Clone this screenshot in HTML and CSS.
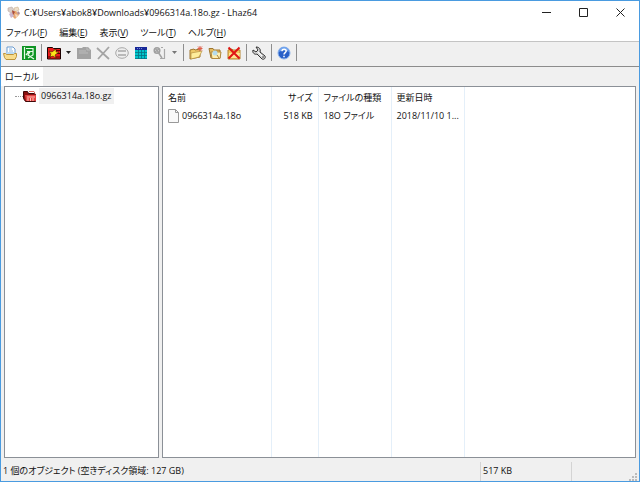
FILE: index.html
```
<!DOCTYPE html>
<html lang="ja">
  <head>
    <meta charset="utf-8" />
    <title>Lhaz64</title>
    <link rel="stylesheet" href="styles.css">
  </head>
  <body>
    <div class="window">
      <header class="titlebar">
        <svg class="app-icon" width="14" height="14" viewBox="0 0 14 14">
          <path d="M1 2l4-1 2 3-3 3-3-2z" fill="#d9cfc8" stroke="#b8aaa2" stroke-width=".6" />
          <path d="M7 2l4-1 1 3-4 2z" fill="#eedfc9" stroke="#cbb18f" stroke-width=".6" />
          <path d="M5 5l4 0 3 4-4 4-4-4z" fill="#e8a56f" />
          <path d="M2 8l3-2 2 4-3 2z" fill="#cbb6ce" />
          <path d="M5 4l3 2-2 3z" fill="#a54c43" />
          <path d="M8 8l3 1-2 3z" fill="#f4d9c0" />
          <path d="M11 5l2 2-1 2-2-2z" fill="#ae8a92" />
        </svg>
        <span class="title">C:¥Users¥abok8¥Downloads¥0966314a.18o.gz - Lhaz64</span>
        <div class="caption">
          <button aria-label="最小化"><svg width="9" height="9" viewBox="0 0 9 9"><path d="M0 4.5h9" /></svg></button>
          <button aria-label="最大化"><svg width="9" height="9" viewBox="0 0 9 9"><path d="M.5.5h8v8h-8z" /></svg></button>
          <button aria-label="閉じる"><svg width="9" height="9" viewBox="0 0 9 9"><path d="M.5.5l8 8M8.5.5l-8 8" /></svg></button>
        </div>
      </header>

      <nav class="menubar">
        <button>ファイル(<u>F</u>)</button>
        <button>編集(<u>E</u>)</button>
        <button>表示(<u>V</u>)</button>
        <button>ツール(<u>T</u>)</button>
        <button>ヘルプ(<u>H</u>)</button>
      </nav>

      <div class="toolbar">
        <button aria-label="開く">
          <svg width="14" height="14" viewBox="0 0 14 14">
            <path d="M4 1h6l2 2v6H4z" fill="#fff" stroke="#6a9bd0" />
            <path d="M6 3h3M6 5h4" stroke="#8db6e2" />
            <path d="M3 9l1-3h7l2 3z" fill="#b9d9f5" />
            <path d="M.5 7.500h2l1 1h7l1-1h2v3l-1.500 3h-9l-1.500-2z" fill="#f8dc8c" stroke="#bd943c" />
          </svg>
        </button>
        <button aria-label="圧縮">
          <svg width="14" height="14" viewBox="0 0 14 14">
            <path d="M0 0h14v14H0z" fill="#0f9424" />
            <path d="M2.500 1v12M4 2.500h7v3H5M7 5.500L4 9M8 6l-2 3 6 4M11 6v3L6 12" fill="none" stroke="#e8fbe8" stroke-width="1.200" />
          </svg>
        </button>
        <span class="sep"></span>
        <button aria-label="解凍">
          <svg width="14" height="14" viewBox="0 0 14 14">
            <path d="M.5 1.500h5l1 1h7v10.500H.5z" fill="#ee1c1c" stroke="#1c0000" />
            <path d="M7 4.500h6M1 11h3M9 11h4M10 7.500h3" stroke="#5c0000" />
            <path d="M2 5l3 1 4-3v3h3L8 9l1 3-3-2-3 1 1-3z" fill="#ffe619" stroke="#241800" stroke-width=".5" />
          </svg>
        </button>
        <button class="drop" aria-label="解凍メニュー"><svg width="5" height="3" viewBox="0 0 5 3"><path d="M0 0h5L2.500 3z" fill="#222" /></svg></button>
        <button disabled aria-label="追加">
          <svg width="14" height="14" viewBox="0 0 14 14">
            <path d="M0 2h5l1-1h5l3 3v9H0z" fill="#a3a3a3" />
            <path d="M10 1v3h3M2 5h7M2 7h9" fill="none" stroke="#bcbcbc" />
          </svg>
        </button>
        <button disabled aria-label="削除">
          <svg width="14" height="14" viewBox="0 0 14 14"><path d="M1 2l12 11M13 1L2 13" stroke="#a4a4a4" stroke-width="1.800" /></svg>
        </button>
        <button disabled aria-label="表示">
          <svg width="14" height="14" viewBox="0 0 14 14">
            <ellipse cx="7" cy="7" rx="6.300" ry="5.300" fill="#eee" stroke="#a8a8a8" />
            <path d="M3 5h8M3 9h8" stroke="#a8a8a8" stroke-width="1.500" />
          </svg>
        </button>
        <button aria-label="一覧">
          <svg width="14" height="14" viewBox="0 0 14 14">
            <path d="M1 1h12v12H1z" fill="#00c5cb" />
            <path d="M1 1h12v3H1z" fill="#172898" />
            <path d="M1 6.500h12M1 9.500h12M1 12.500h12M4.500 4v9M7.500 4v9M10.500 4v9" stroke="#087283" stroke-width=".8" />
            <path d="M3 2.500h6" stroke="#7689d8" stroke-dasharray="1 1" />
          </svg>
        </button>
        <button disabled aria-label="検査">
          <svg width="14" height="14" viewBox="0 0 14 14">
            <path d="M8 1.500h2M11.500 3v9.500H7" fill="none" stroke="#a8a8a8" stroke-width="1.200" />
            <circle cx="4" cy="4.500" r="2.800" fill="#ddd" stroke="#a0a0a0" stroke-width="1.500" />
            <path d="M2 2l4 5M5 6l4 6M2 6l4-3" stroke="#a3a3a3" stroke-width="1.500" />
          </svg>
        </button>
        <button class="drop" disabled aria-label="検査メニュー"><svg width="5" height="3" viewBox="0 0 5 3"><path d="M0 0h5L2.500 3z" fill="#777" /></svg></button>
        <span class="sep"></span>
        <button aria-label="新しいフォルダ">
          <svg width="14" height="14" viewBox="0 0 14 14">
            <path d="M1 4l4-1 1 1 5-1v8l-10 2z" fill="#efc968" stroke="#9e7630" />
            <path d="M2 7l11-2-3 6-8 2z" fill="#ffed9c" stroke="#b89040" stroke-width=".7" />
            <path d="M11 0v5M8.500 2.500h5M9 .5l4 4M13 .5l-4 4" stroke="#e0604c" />
          </svg>
        </button>
        <button aria-label="フォルダを開く">
          <svg width="14" height="14" viewBox="0 0 14 14">
            <path d="M1 2.500h4l1 1.500h6v8H3z" fill="#e5bb60" stroke="#9e7630" />
            <path d="M3 6h10l-1 6.500H4z" fill="#fff0b1" stroke="#b1893d" />
            <circle cx="7" cy="7" r="2.500" fill="#b5dced" />
            <path d="M9 9l2 3" stroke="#a48044" />
          </svg>
        </button>
        <button aria-label="フォルダを削除">
          <svg width="14" height="14" viewBox="0 0 14 14">
            <path d="M1 4l4-1 1 1h7v9H1z" fill="#f3c65c" stroke="#b68531" />
            <path d="M2 7h11l-1 5H2z" fill="#ffe491" />
            <path d="M1.500 1.500l11 11M12.500 1.500l-11 11" stroke="#e01414" stroke-width="2" />
          </svg>
        </button>
        <span class="sep"></span>
        <button aria-label="設定">
          <svg width="14" height="14" viewBox="0 0 14 14">
            <path d="M4 1l2 3-2 2-3-2c-1 3 2 5 4 4l5 5c2 1 4-1 3-3L8 6c1-3-1-5-4-5z" fill="#d8d8d8" stroke="#333" />
            <path d="M6 6l5 5" stroke="#fff" />
            <circle cx="11" cy="11" r=".8" fill="#333" />
          </svg>
        </button>
        <span class="sep"></span>
        <button aria-label="ヘルプ">
          <svg width="14" height="14" viewBox="0 0 14 14">
            <circle cx="7" cy="7" r="6" fill="#2860c8" stroke="#8db4ec" />
            <path d="M2 6a5 5 0 0 1 10 0c-3-2-7-2-10 0z" fill="#6fa3ee" />
            <path d="M5 5.300c0-3 4.200-2.700 4.200-.2 0 1.600-2.200 1.600-2.200 3.400M7 9.700v1.500" fill="none" stroke="#fff" stroke-width="1.500" />
          </svg>
        </button>
        <span class="sep"></span>
      </div>

      <div class="tabs"><button class="tab">ローカル</button></div>

      <main class="panes">
        <section class="pane tree">
          <div class="node">
            <span class="branch"></span>
            <svg width="14" height="12" viewBox="0 0 14 12">
              <path d="M.5 1.500h4l1 2h6l1 1v7h-10l-2-3z" fill="#8b1010" stroke="#400808" />
              <path d="M2 5h11v6H3z" fill="#e34343" />
              <path d="M4 7h8M5 8v3M7.500 8v3M10 8v3" stroke="#ffc4b8" />
              <path d="M6 1.500h5l1 2" fill="none" stroke="#e06b60" />
            </svg>
            <span class="selected">0966314a.18o.gz</span>
          </div>
        </section>
        <section class="pane">
          <table class="files">
            <colgroup>
              <col class="c-name"><col class="c-size"><col class="c-type"><col class="c-date"><col>
            </colgroup>
            <thead>
              <tr><th>名前</th><th class="num">サイズ</th><th>ファイルの種類</th><th>更新日時</th><th></th></tr>
            </thead>
            <tbody>
              <tr class="file">
                <td>
                  <span class="file-name">
                    <svg width="11" height="14" viewBox="0 0 11 14">
                      <path d="M.5.5h7l3 3v10H.5z" fill="#f9f9f9" stroke="#999" />
                      <path d="M7.500.5v3h3" fill="none" stroke="#999" />
                    </svg>
                    0966314a.18o
                  </span>
                </td>
                <td class="num">518 KB</td>
                <td>18O ファイル</td>
                <td>2018/11/10 1...</td>
                <td></td>
              </tr>
              <tr><td></td><td></td><td></td><td></td><td></td></tr>
            </tbody>
          </table>
        </section>
      </main>

      <footer class="statusbar">
        <span class="status-main">1 個のオブジェクト (空きディスク領域: 127 GB)</span>
        <span class="status-size">517 KB</span>
        <span class="status-grip">
          <svg width="8" height="8" viewBox="0 0 8 8"><path d="M6 0h2v2H6zM3 3h2v2H3zM6 3h2v2H6zM0 6h2v2H0zM3 6h2v2H3zM6 6h2v2H6z" fill="#bbb" /></svg>
        </span>
      </footer>
    </div>
  </body>
</html>
```
FILE: styles.css
```
* {
  box-sizing: border-box;
}

body {
  margin: 0;
  font-family: "Open Sans", "Noto Sans CJK JP", sans-serif;
  font-size: 9px;
  line-height: 16px;
  font-feature-settings: "palt";
  color: #111;
}

button {
  font: inherit;
  font-feature-settings: inherit;
  color: inherit;
  background: none;
  border: 0;
  padding: 0;
}

svg {
  display: block;
  flex: none;
}

.window {
  display: flex;
  flex-direction: column;
  height: 100vh;
  border: 1px solid #4a9be0;
  background: #f0f0f0;
}

.titlebar {
  display: flex;
  align-items: center;
  height: 23px;
  background: #fff;
}

.app-icon {
  margin: 0 3px 0 6px;
}

.title {
  flex: 1;
  white-space: nowrap;
}

.caption {
  display: flex;
}

.caption button {
  display: flex;
  justify-content: center;
  align-items: center;
  width: 37px;
  height: 23px;
}

.caption path {
  fill: none;
  stroke: #222;
}

.menubar {
  display: flex;
  gap: 12px;
  height: 17px;
  padding: 0 5px;
  background: #fff;
}

.toolbar {
  display: flex;
  align-items: center;
  height: 26px;
  padding-bottom: 3px;
  border-top: 1px solid #c4c4c4;
  border-bottom: 1px solid #8c8c8c;
}

.toolbar button {
  display: flex;
  align-items: center;
  width: 19px;
  height: 19px;
  padding-left: 2px;
}

.toolbar .drop {
  width: 11px;
}

.sep {
  width: 6px;
  height: 17px;
  background: linear-gradient(#8e8e8e, #8e8e8e) 2px 0 / 1px 100% no-repeat;
}

.tabs {
  height: 19px;
}

.tab {
  width: 42px;
  height: 19px;
  background: #fff;
}

.panes {
  display: flex;
  flex: 1;
  gap: 3px;
  min-height: 0;
  padding: 0 3px;
}

.pane {
  flex: 1;
  border: 1px solid #8b9097;
  background: #fff;
}

.tree {
  flex: 0 0 24%;
  min-width: 155px;
}

.node {
  display: flex;
  align-items: center;
  padding: 1px 0 0 10px;
}

.branch {
  width: 8px;
  border-top: 1px dotted #999;
}

.selected {
  margin-left: 2px;
  padding: 0 2px;
  background: #f0f0f0;
}

.files {
  width: 100%;
  height: 100%;
  table-layout: fixed;
  border-collapse: collapse;
}

.c-name {
  width: 108px;
}

.c-size {
  width: 47px;
}

.c-type,
.c-date {
  width: 73px;
}

.files th,
.files td {
  padding: 0 5px;
  border-right: 1px solid #e4eff9;
  font-weight: normal;
  text-align: left;
  white-space: nowrap;
}

.files th:last-child,
.files td:last-child {
  border-right: 0;
}

.files th {
  height: 21px;
}

.file td {
  height: 16px;
}

.files .num {
  text-align: right;
}

.file-name {
  display: flex;
  align-items: center;
  gap: 3px;
}

.statusbar {
  display: flex;
  height: 23px;
  padding-top: 4px;
}

.statusbar span {
  padding: 1px 2px 0;
}

.status-main {
  flex: 1;
}

.status-size {
  width: 91px;
  border-left: 1px solid #d4d4d4;
}

.status-grip {
  display: flex;
  justify-content: flex-end;
  align-items: flex-end;
  width: 68px;
  border-left: 1px solid #d4d4d4;
}
```
